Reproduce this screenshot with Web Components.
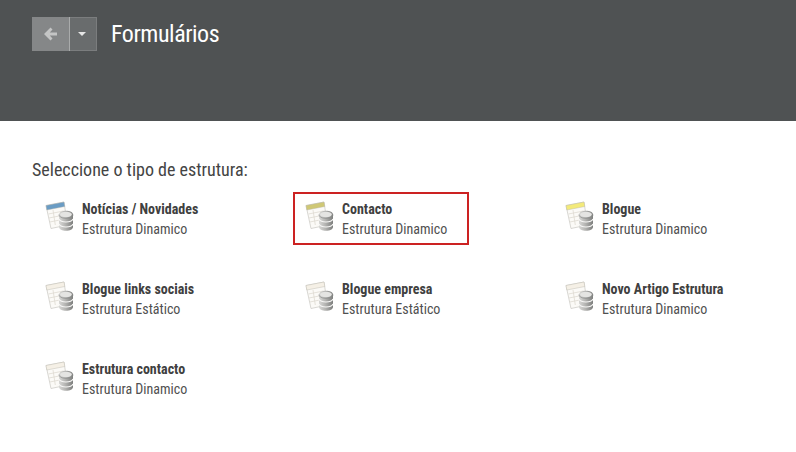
<!DOCTYPE html>
<html lang="pt">
<head>
<meta charset="utf-8">
<title>Formulários</title>
<style>
  html, body { margin: 0; padding: 0; background: #fff; }
  body { font-family: Roboto, "Liberation Sans", sans-serif; overflow: hidden; }
</style>
</head>
<body>
<form-header title-text="Formulários"></form-header>
<structure-picker heading="Seleccione o tipo de estrutura:">
  <structure-item name="Notícias / Novidades" kind="Estrutura Dinamico" tint="blue"></structure-item>
  <structure-item name="Contacto" kind="Estrutura Dinamico" tint="olive" selected></structure-item>
  <structure-item name="Blogue" kind="Estrutura Dinamico" tint="yellow"></structure-item>
  <structure-item name="Blogue links sociais" kind="Estrutura Estático" tint="plain"></structure-item>
  <structure-item name="Blogue empresa" kind="Estrutura Estático" tint="plain"></structure-item>
  <structure-item name="Novo Artigo Estrutura" kind="Estrutura Dinamico" tint="plain"></structure-item>
  <structure-item name="Estrutura contacto" kind="Estrutura Dinamico" tint="plain"></structure-item>
</structure-picker>

<script>
const TINTS = {
  blue: '#6a9cc4',
  olive: '#cfc875',
  yellow: '#f3ea7a',
  plain: '#f5f0e6'
};

class FormHeader extends HTMLElement {
  constructor() {
    super();
    this.attachShadow({ mode: 'open' });
  }

  connectedCallback() {
    this.shadowRoot.innerHTML = `
      <style>
        :host {
          display: block;
          height: 121px;
          background: #4f5253;
          box-sizing: border-box;
          padding: 17px 32px 0;
        }
        .row { display: flex; align-items: center; height: 34px; }
        .group { display: flex; height: 34px; }
        .back, .more {
          display: flex;
          align-items: center;
          justify-content: center;
          height: 34px;
          box-sizing: border-box;
        }
        .back { width: 38px; background: #858788; border-right: 1px solid #a9abab; }
        .more { width: 27px; padding-right: 3px; background: #696c6d; border: 1px solid #7b7d7e; border-left: 0; }
        h1 {
          margin: 0 0 0 14px;
          font: 400 24px Roboto, sans-serif;
          font-stretch: 75%;
          letter-spacing: -0.45px;
          color: #fff;
        }
      </style>
      <div class="row">
        <div class="group">
          <div class="back">
            <svg width="15" height="14" viewBox="0 0 15 14"><path d="M7.500.5 1 7l6.500 6.500 2-2L6.800 8.500H14v-3H6.800l2.700-3z" fill="#c4c5c5"/></svg>
          </div>
          <div class="more">
            <svg width="8" height="4" viewBox="0 0 8 4"><path d="M0 0h8L4 4z" fill="#e6e6e6"/></svg>
          </div>
        </div>
        <h1>${this.getAttribute('title-text')}</h1>
      </div>
    `;
  }
}

class StructurePicker extends HTMLElement {
  constructor() {
    super();
    this.attachShadow({ mode: 'open' });
  }

  connectedCallback() {
    this.shadowRoot.innerHTML = `
      <style>
        :host { display: block; padding: 38px 32px 0; color: #3b3b3b; }
        h2 {
          margin: 0;
          font: 400 18px/22px Roboto, sans-serif;
          font-stretch: 75%;
          color: #444;
        }
        .grid {
          display: grid;
          grid-template-columns: repeat(3, 260px);
          grid-auto-rows: 80px;
          margin-top: 11px;
          justify-items: start;
        }
      </style>
      <h2>${this.getAttribute('heading')}</h2>
      <div class="grid"><slot></slot></div>
    `;
  }
}

class StructureItem extends HTMLElement {
  constructor() {
    super();
    this.attachShadow({ mode: 'open' });
  }

  connectedCallback() {
    const tint = TINTS[this.getAttribute('tint')] || TINTS.plain;
    this.shadowRoot.innerHTML = `
      <style>
        :host { display: block; }
        .box {
          display: flex;
          align-items: flex-start;
          height: 53px;
          box-sizing: border-box;
          margin-left: 1px;
          padding: 5px 20px 0 10px;
          border: 2px solid transparent;
        }
        :host([selected]) .box { border-color: #cc2222; }
        svg { flex: none; width: 31px; height: 32px; margin-right: 6px; }
        .text { display: flex; flex-direction: column; white-space: nowrap; }
        b { font: 700 14px/20px Roboto, sans-serif; font-stretch: 75%; color: #404040; }
        span { font: 400 14px/20px Roboto, sans-serif; font-stretch: 75%; color: #505050; }
      </style>
      <div class="box">
        <svg viewBox="0 0 31 32">
          <defs>
            <linearGradient id="metal" x1="0" x2="1" y1="0" y2="0">
              <stop offset="0" stop-color="#d8d8d6"/>
              <stop offset=".45" stop-color="#b4b4b2"/>
              <stop offset="1" stop-color="#7c7d7c"/>
            </linearGradient>
          </defs>
          <path d="M1 6.500 19 3l3.500 23L6 29.500z" fill="#fbfaf7" stroke="#c8c7c1" stroke-width=".7"/>
          <path d="M1 6.500 19 3l.8 4.500L1.800 11z" fill="${tint}" stroke="#b5b4a8" stroke-width=".4"/>
          <path d="M3.500 15l15-3M4 19l11-2.200M4.800 23l9-1.800M8 11l2.300 15" stroke="#dedbd2" stroke-width=".8" fill="none"/>
          <path d="M14 15.500c0-2.500 3.200-3.800 7-3.800s7 1.300 7 3.800v12.500c0 2.400-3.200 3.700-7 3.700s-7-1.300-7-3.700z" fill="url(#metal)"/>
          <ellipse cx="21" cy="15.500" rx="5.800" ry="2.700" fill="#e4e4e2"/>
          <path d="M14 20c1 2 3.800 3 7 3s6-1 7-3M14 25c1 2 3.800 3 7 3s6-1 7-3" stroke="#f6f6f5" stroke-width="1.200" fill="none"/>
          <path d="M14 15.500c0 2.500 3.200 3.800 7 3.800s7-1.300 7-3.800" stroke="#8a8b8a" stroke-width=".7" fill="none"/>
        </svg>
        <div class="text">
          <b>${this.getAttribute('name')}</b>
          <span>${this.getAttribute('kind')}</span>
        </div>
      </div>
    `;
  }
}

customElements.define('form-header', FormHeader);
customElements.define('structure-picker', StructurePicker);
customElements.define('structure-item', StructureItem);
</script>
</body>
</html>
